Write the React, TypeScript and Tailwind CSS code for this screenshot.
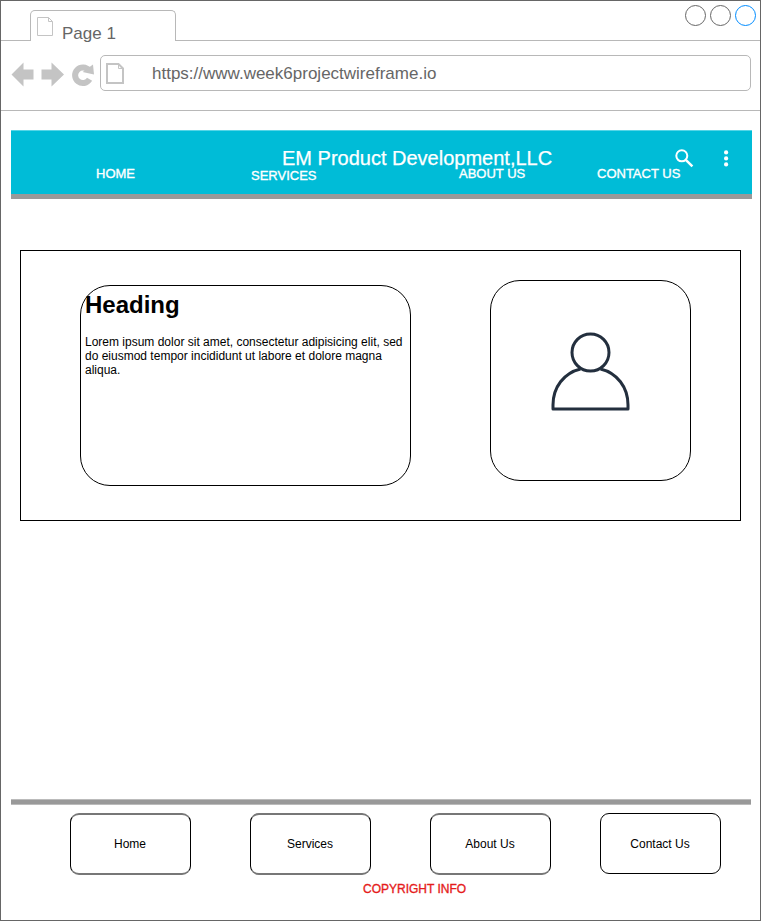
import React from 'react';

function TabBar() {
  return (
    <div className="flex h-10 shrink-0">
      <div className="w-[29px] border-b border-[#b8b8b8]" />
      <div className="mt-[9px] flex w-[146px] rounded-t-[5px] border border-b-0 border-[#b8b8b8]">
        <svg className="ml-[6px] mt-[6px] h-[19px] w-4" viewBox="0 0 16 19" fill="none" stroke="#c4c4c4">
          <path d="M0.5 0.5H11.5L15.5 4.5V18.5H0.5ZM11.5 0.5V4.5H15.5" />
        </svg>
        <span className="ml-[9px] mt-[13px] text-[17px] leading-5 text-[#666]">Page 1</span>
      </div>
      <div className="flex flex-1 justify-end gap-1 border-b border-[#b8b8b8] pr-1 pt-1">
        <span className="size-[21px] rounded-full border border-[#666]" />
        <span className="size-[21px] rounded-full border border-[#666]" />
        <span className="size-[21px] rounded-full border border-[#008cff]" />
      </div>
    </div>
  );
}

function Toolbar() {
  return (
    <div className="flex h-[70px] shrink-0 border-b border-[#b8b8b8] pl-[10px] pr-[9px] pt-[14px]">
      <svg className="mt-[7px] h-[25px] w-[89px] shrink-0" viewBox="0 0 89 25" fill="#c4c4c4">
        <path d="M0.5 12.5L12.5 0.5V7.5H22.5V17.5H12.5V24.5Z" />
        <path d="M53 12.5L40.5 0.5V7.5H30.5V17.5H40.5V24.5Z" />
        <path d="M78 8.4A7.8 7.8 0 1 0 78.6 17.3" fill="none" stroke="#c4c4c4" strokeWidth="6" />
        <path d="M82 2.5L83 12.6L71.6 10Z" />
      </svg>
      <div className="flex h-9 flex-1 items-center rounded-[5px] border border-[#b8b8b8] pl-[5px]">
        <svg className="h-[21px] w-[18px]" viewBox="0 0 18 21" fill="none" stroke="#c4c4c4">
          <path d="M1 1H12.5L17 5.5V20H1Z" strokeWidth="2" />
          <path d="M12.5 1V5.5H17" />
        </svg>
        <span className="ml-7 mt-[2px] text-[17px] leading-5 text-[#666]">https://www.week6projectwireframe.io</span>
      </div>
    </div>
  );
}

function SiteHeader() {
  return (
    <header className="ml-[10px] mt-[19px] h-[69px] w-[741px] shrink-0 border-b-[5px] border-t border-b-[#999] border-t-[#55d5e7] bg-[#00bcd7] text-white">
      <div className="flex h-[35px] pt-[17px]">
        <h1 className="ml-[271px] w-[270px] whitespace-nowrap text-[20px] leading-5 [-webkit-text-stroke:0.25px_white]">EM Product Development,LLC</h1>
        <svg className="ml-[123px] mt-[1px] size-[19px]" viewBox="0 0 19 19" fill="none" stroke="currentColor" strokeWidth="2">
          <circle cx="6.8" cy="6.8" r="5.5" />
          <path d="M10.8 10.8L17.4 17.4" strokeWidth="2.4" />
        </svg>
        <svg className="ml-[30px] mt-[2px] h-[17px] w-[5px]" viewBox="0 0 5 17" fill="currentColor">
          <circle cx="2.1" cy="2.4" r="2.1" />
          <circle cx="2.1" cy="8.4" r="2.1" />
          <circle cx="2.1" cy="14.4" r="2.1" />
        </svg>
      </div>
      <nav className="flex whitespace-nowrap text-[13px] leading-4 [-webkit-text-stroke:0.35px_white]">
        <a className="ml-[85px] w-[155px]">HOME</a>
        <a className="mt-[2px] w-[208px]">SERVICES</a>
        <a className="w-[138px]">ABOUT US</a>
        <a>CONTACT US</a>
      </nav>
    </header>
  );
}

function Hero() {
  return (
    <section className="ml-[19px] mt-[51px] flex h-[271px] w-[721px] shrink-0 border border-black">
      <article className="ml-[59px] mt-[34px] h-[201px] w-[331px] rounded-[30px] border border-black pl-1 text-black">
        <h2 className="mt-[5px] text-[24px] font-bold leading-7">Heading</h2>
        <p className="mt-4 whitespace-nowrap text-[12px] leading-[14px]">
          Lorem ipsum dolor sit amet, consectetur adipisicing elit, sed<br />
          do eiusmod tempor incididunt ut labore et dolore magna<br />
          aliqua.
        </p>
      </article>
      <div className="ml-[79px] mt-[29px] flex h-[201px] w-[201px] justify-center rounded-[30px] border border-black pt-[51px]">
        <svg className="size-[79px]" viewBox="0 0 79 79" fill="none" stroke="#232f3e" strokeWidth="3">
          <circle cx="39.5" cy="20.5" r="18.5" />
          <path d="M29.5 37C13 41 2 55 2 73V77H77V73C77 55 66 41 49.5 37" strokeLinejoin="round" />
        </svg>
      </div>
    </section>
  );
}

const softBox = 'flex h-[62px] w-[121px] items-center justify-center rounded-[9px] border-x border-y-2 border-x-black border-y-[#777] pr-px';

function Footer() {
  return (
    <footer className="ml-[9px] mt-[278px] w-[741px] text-black">
      <div className="ml-px h-[6px] w-[740px] border-y border-[#bbb] bg-[#999]" />
      <div className="mt-2 flex pl-[60px] text-[12px]">
        <a className={softBox}>Home</a>
        <a className={`${softBox} ml-[59px]`}>Services</a>
        <a className={`${softBox} ml-[59px]`}>About Us</a>
        <a className="ml-[49px] flex h-[61px] w-[121px] items-center justify-center rounded-[9px] border border-black pr-px">Contact Us</a>
      </div>
      <p className="ml-[353px] mt-[6px] text-[12px] leading-4 text-[#e51c1c] [-webkit-text-stroke:0.35px_#e51c1c]">COPYRIGHT INFO</p>
    </footer>
  );
}

export default function App() {
  return (
    <main className="flex h-[921px] w-[761px] flex-col overflow-hidden border border-[#666] bg-white font-['Liberation_Sans',Arial,sans-serif]">
      <TabBar />
      <Toolbar />
      <SiteHeader />
      <Hero />
      <Footer />
    </main>
  );
}
